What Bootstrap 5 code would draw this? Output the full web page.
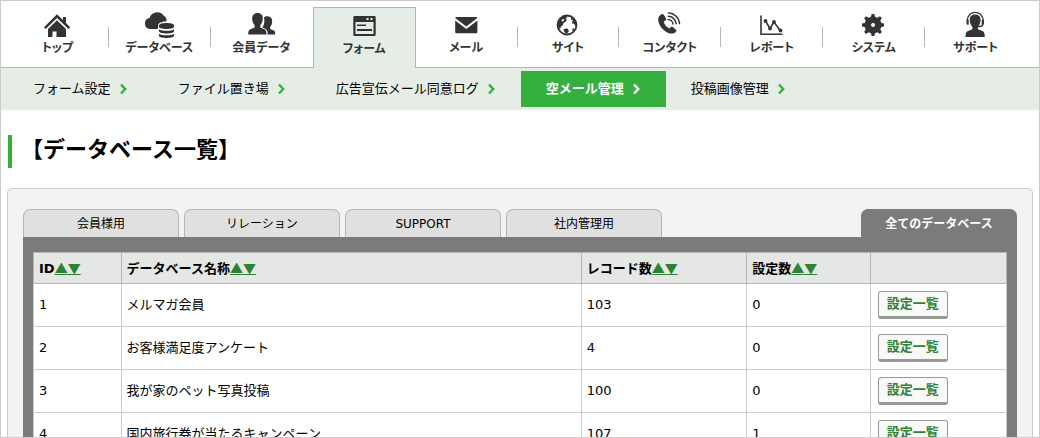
<!DOCTYPE html>
<html lang="ja">
<head>
<meta charset="utf-8">
<meta name="viewport" content="width=device-width, initial-scale=1">
<title>データベース一覧</title>
<link href="https://cdn.jsdelivr.net/npm/bootstrap@5.3.0/dist/css/bootstrap.min.css" rel="stylesheet">
<style>
  body { font: 13px/20px "DejaVu Sans", "Noto Sans CJK JP", sans-serif; color: #000; background: #fff; }
  .app-frame { border: 1px solid #ccc; overflow-y: auto; scrollbar-width: none; }
  .app-frame::-webkit-scrollbar { display: none; }

  .main-nav { padding: 6px 12px 0 6px; border-bottom: 1px solid #b4b8b4; }
  .main-nav .nav-link { position: relative; flex: 1 1 0; height: 60px; padding: 4px 0 0; color: #333; border-right: 1px solid transparent;
    font: 700 12px/16px "Noto Sans CJK JP", sans-serif; font-feature-settings: "palt"; text-align: center; white-space: nowrap; }
  .main-nav .nav-link svg { display: block; width: 33px; height: 28px; margin: 0 auto; fill: #333; }
  .main-nav .nav-link.divided::after { content: ""; position: absolute; right: -1px; top: 20px; width: 1px; height: 20px; background: #b4b8b4; }
  .main-nav .nav-link.active { height: 61px; margin-bottom: -1px; padding-top: 3px; background: #e6ede6; border: 1px solid #b4b8b4; border-bottom: 0; }
  .main-nav .nav-link.active svg { margin-bottom: 1px; }

  .sub-nav { padding: 3px 7px; background: #e6ede6; }
  .sub-nav .nav-link { display: flex; align-items: center; gap: 9px; height: 36px; padding: 0 26px 0 25px; color: #000; white-space: nowrap; }
  .sub-nav .nav-link.active { background: #35b03f; color: #fff; font-weight: 700; }
  .sub-nav svg { width: 7px; height: 12px; fill: none; stroke: #35b03f; stroke-width: 2.4; }
  .sub-nav .active svg { stroke: #fff; }

  .page-title { margin: 25px 7px 20px; padding: 1px 0 4px 9px; border-left: 4px solid #35b03f; font-size: 22px; line-height: 28px; font-weight: 700; }
  .db-panel { margin: 0 6px 20px; padding: 20px 15px; background: #f3f3f3; border: 1px solid #ccc; border-radius: 5px; }
  .db-tabs { gap: 5px; }
  .db-tabs .nav-link { flex: 0 1 156px; height: 28px; padding: 4px 0 0; background: #e0e0e0; border: 1px solid #b5b5b5; border-bottom: 0;
    border-radius: 7px 7px 0 0; color: #000; font-size: 12px; line-height: 20px; text-align: center; white-space: nowrap; }
  .db-tabs .nav-link.active { background: #7b7b7b; border-color: #7b7b7b; color: #fff; font-weight: 700; }
  .db-box { padding: 15px 10px; background: #7b7b7b; }

  .db-table { width: 100%; table-layout: fixed; border-collapse: collapse; background: #fff; }
  .db-table th, .db-table td { border: 1px solid #ccc; padding: 0 5px; vertical-align: middle; }
  .db-table th { height: 31px; background: #e5e7e4; border-color: #b8b8b8; white-space: nowrap; }
  .db-table td { height: 43px; }
  .db-table th a { color: #2e8236; text-decoration: underline; font-family: "Noto Sans CJK JP", sans-serif; font-weight: 400; }
  .col-id { width: 9%; } .col-name { width: 47.3%; } .col-rec { width: 17%; } .col-set { width: 12.7%; }
  .btn-set { display: block; margin-left: 2px; padding: 0 8px; height: 28px; font-size: 13px; line-height: 24px; font-weight: 700;
    color: #2e8236; background: #f9f9f9; border: 1px solid #959a95; border-bottom-width: 3px; border-radius: 3px; }
  .btn-set:hover { color: #2e8236; background: #eee; border-color: #959a95; }
</style>
</head>
<body>
<div class="app-frame vh-100">
  <header>
    <nav class="nav main-nav flex-nowrap" aria-label="メイン">
      <a class="nav-link divided" href="#"><svg viewBox="0 0 33 28" aria-hidden="true"><path d="M16 3.200 22 9V6h3v6l4.200 4.200-1.700 1.700L16 7 4.700 17.900 3 16.200z"/><path d="M16 9.200 25 18v8h-9.500v-5.500h-4V26H7v-8z"/></svg>トップ</a>
      <a class="nav-link divided" href="#"><svg viewBox="0 0 33 28" aria-hidden="true"><path d="M7 18a5.500 5.500 0 0 1-.5-10.900A8 8 0 0 1 20.500 4.500 6 6 0 0 1 23.500 10.500C18 10.500 15 12 15 15v3z"/><path d="M16 14.500c0-3.300 15-3.300 15 0v1.300c0 3-15 3-15 0zM16 18.200c2.500 2 12.500 2 15 0v2c0 3-15 3-15 0zM16 22.700c2.500 2 12.500 2 15 0v2.100c0 3-15 3-15 0z"/></svg>データベース</a>
      <a class="nav-link" href="#"><svg viewBox="0 0 33 28" aria-hidden="true"><path d="M12.500 2c4 0 5.600 2.800 5.200 6.300-.3 3-1.200 4.500-2.400 5.700v2.600l4 1.700c1.700.7 2.200 2 2.200 5.200H3.200c0-3.200.5-4.500 2.200-5.200l4.200-1.700V14C8.400 12.800 7.500 11.300 7.200 8.300 6.800 4.800 8.500 2 12.500 2z"/><path d="M19 6.500C20.200 5 25.500 4.200 27 8.500c.6 3-.3 6-1.800 7.500v2l3 1.200c1.700.7 2 1.500 2 4.300h-7.500c0-3-.5-4.800-2.700-5.800L17.500 16.500c1.500-2.500 2.500-6 1.500-10z"/></svg>会員データ</a>
      <a class="nav-link active" aria-current="page" href="#"><svg viewBox="0 0 33 28" aria-hidden="true"><path fill-rule="evenodd" d="M6.500 5h20a1.200 1.200 0 0 1 1.200 1.200v17.600a1.200 1.200 0 0 1-1.200 1.200h-20a1.200 1.200 0 0 1-1.200-1.200V6.200A1.200 1.200 0 0 1 6.500 5zM7.500 11v12h18V11zM18.500 7v2h2V7zM22.500 7v2h2V7zM9 13.500h9v1.500H9zM9 18h15v2H9z"/></svg>フォーム</a>
      <a class="nav-link divided" href="#"><svg viewBox="0 0 33 28" aria-hidden="true"><path d="M6 6h20.500a.8.800 0 0 1 .5 1.200L16.300 15.500 5.500 7.200A.8.800 0 0 1 6 6zM5.200 9.500l11.100 8.500 11.100-8.500V21a1.200 1.200 0 0 1-1.200 1.200H6.400A1.200 1.200 0 0 1 5.200 21z"/></svg>メール</a>
      <a class="nav-link divided" href="#"><svg viewBox="0 0 33 28" aria-hidden="true"><circle cx="16" cy="14" r="9.500" fill="none" stroke="#333" stroke-width="1.800"/><path d="M15.500 4.500C9 5 6.500 9 6.500 13.500c.8 2 1.300 3.500 2.500 4.500l1-2.500 2-1.500.5-2 2.500-1.500 1-2-1.500-.5 1.500-1.500zM20.500 5l5.500 6.500-.5 4-1.500-1-1-2-1.500.5-.5-2 1-1.500-2-1zM12.500 18l4-.5 1.500 2.500-2 2.500-2.500-1z"/><path d="M11.500 8l2 .5-1.500 2-1.500-.5z" fill="#fff"/><path d="M22 17l1.500 1-1 2-1.500-.5z"/></svg>サイト</a>
      <a class="nav-link divided" href="#"><svg viewBox="0 0 33 28" aria-hidden="true"><path d="M8.500 3.300c1-.6 1.800-.3 2.400.6l2 3.300c.5.900.3 1.600-.5 2.200l-1.600 1c.5 3 2.700 5.700 5.500 7l1.700-1.300c.8-.6 1.500-.5 2.200.1l2.600 2.500c.8.800.7 1.600 0 2.300-2.500 2.300-6.300 2-9.800-.3C8.500 17.700 5.300 13 5.200 8.500 5.200 6 6.500 4.300 8.500 3.300z"/><g fill="none" stroke="#333" stroke-width="1.500" stroke-linecap="round"><path d="M15.500 2c5.500-.2 10.500 4.500 11 10.500M15.200 5.200c4 0 7.500 3.300 8 7.500M15 8.400c2.500 0 4.700 2 5 4.600"/></g></svg>コンタクト</a>
      <a class="nav-link divided" href="#"><svg viewBox="0 0 33 28" aria-hidden="true"><g fill="none" stroke="#333"><path stroke-width="1.600" d="M6 4.500V23.300h21.500"/><path stroke-width="1.500" d="M10.500 10l4.500 7.500L19 11l6.500 9"/></g><circle cx="10.500" cy="10" r="1.900"/><circle cx="15" cy="17.500" r="1.900"/><circle cx="19" cy="11" r="1.900"/><circle cx="25.500" cy="19.500" r="1.900"/></svg>レポート</a>
      <a class="nav-link divided" href="#"><svg viewBox="0 0 33 28" aria-hidden="true"><path fill-rule="evenodd" d="M14 5.800 14.600 3h2.800l.6 2.800 2.400 1 2.500-1.600 2 2-1.600 2.400 1 2.500 2.700.5v2.900l-2.700.5-1 2.500 1.600 2.400-2 2-2.500-1.600-2.400 1-.6 2.700h-2.800l-.6-2.700-2.400-1L9.100 22.900l-2-2 1.600-2.400-1-2.500L5 15.500v-2.900l2.700-.5 1-2.500L7.100 7.200l2-2 2.500 1.600zM16 12a2 2 0 1 0 .1 0z"/></svg>システム</a>
      <a class="nav-link" href="#"><svg viewBox="0 0 33 28" aria-hidden="true"><path d="M8.300 10C8.300-1.500 24.200-1.500 24.200 10M24 13c-.5 2.200-2 2.700-5 2.700" fill="none" stroke="#333" stroke-width="1.300"/><path d="M16.200 3.500c4 0 5.600 2.500 5.300 6-.2 3.200-1.200 5-2.600 6.300v2.400l5 2c1.500.6 1.800 2.500 1.900 5.800H6.500c.1-3.300.4-5.200 1.900-5.800l5-2v-2.400c-1.400-1.300-2.400-3.100-2.600-6.300-.3-3.500 1.400-6 5.400-6zM7.500 8.700h2.200v5H8.800a1.300 1.300 0 0 1-1.300-1.300zM22.700 8.700H25v3.700a1.300 1.300 0 0 1-1.300 1.300h-1z"/></svg>サポート</a>
    </nav>
    <nav class="nav sub-nav flex-nowrap" aria-label="フォーム">
      <a class="nav-link" href="#">フォーム設定<svg viewBox="0 0 7 12" aria-hidden="true"><path d="M1 1.500 5.200 6 1 10.500"/></svg></a>
      <a class="nav-link" href="#">ファイル置き場<svg viewBox="0 0 7 12" aria-hidden="true"><path d="M1 1.500 5.200 6 1 10.500"/></svg></a>
      <a class="nav-link" href="#">広告宣伝メール同意ログ<svg viewBox="0 0 7 12" aria-hidden="true"><path d="M1 1.500 5.200 6 1 10.500"/></svg></a>
      <a class="nav-link active" href="#">空メール管理<svg viewBox="0 0 7 12" aria-hidden="true"><path d="M1 1.500 5.200 6 1 10.500"/></svg></a>
      <a class="nav-link" href="#">投稿画像管理<svg viewBox="0 0 7 12" aria-hidden="true"><path d="M1 1.500 5.200 6 1 10.500"/></svg></a>
    </nav>
  </header>

  <main>
    <h1 class="page-title">【データベース一覧】</h1>
    <section class="db-panel">
      <nav class="nav db-tabs flex-nowrap" aria-label="データベース">
        <a class="nav-link" href="#">会員様用</a>
        <a class="nav-link" href="#">リレーション</a>
        <a class="nav-link" href="#">SUPPORT</a>
        <a class="nav-link" href="#">社内管理用</a>
        <a class="nav-link active ms-auto" href="#">全てのデータベース</a>
      </nav>
      <div class="db-box">
        <table class="db-table">
          <colgroup><col class="col-id"><col class="col-name"><col class="col-rec"><col class="col-set"><col></colgroup>
          <thead>
            <tr>
              <th scope="col">ID<a href="#">▲</a><a href="#">▼</a></th>
              <th scope="col">データベース名称<a href="#">▲</a><a href="#">▼</a></th>
              <th scope="col">レコード数<a href="#">▲</a><a href="#">▼</a></th>
              <th scope="col">設定数<a href="#">▲</a><a href="#">▼</a></th>
              <th></th>
            </tr>
          </thead>
          <tbody>
            <tr><td>1</td><td>メルマガ会員</td><td>103</td><td>0</td><td><button type="button" class="btn btn-set">設定一覧</button></td></tr>
            <tr><td>2</td><td>お客様満足度アンケート</td><td>4</td><td>0</td><td><button type="button" class="btn btn-set">設定一覧</button></td></tr>
            <tr><td>3</td><td>我が家のペット写真投稿</td><td>100</td><td>0</td><td><button type="button" class="btn btn-set">設定一覧</button></td></tr>
            <tr><td>4</td><td>国内旅行券が当たるキャンペーン</td><td>107</td><td>1</td><td><button type="button" class="btn btn-set">設定一覧</button></td></tr>
          </tbody>
        </table>
      </div>
    </section>
  </main>
</div>
<script src="https://cdn.jsdelivr.net/npm/bootstrap@5.3.0/dist/js/bootstrap.bundle.min.js"></script>
</body>
</html>
